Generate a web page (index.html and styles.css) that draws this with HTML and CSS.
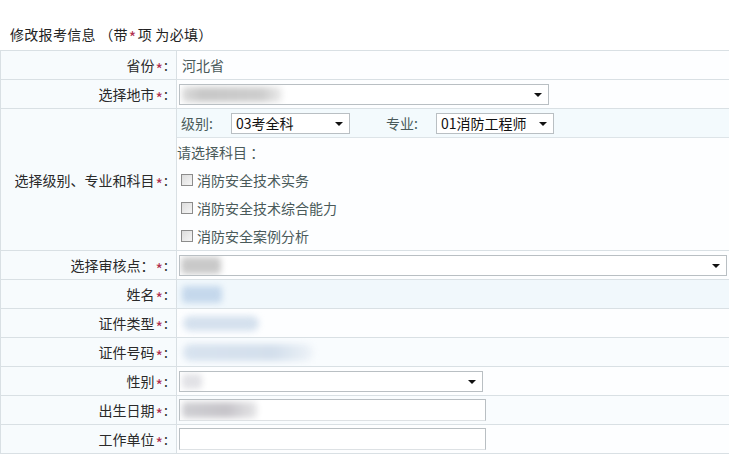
FILE: index.html
```
<!DOCTYPE html>
<html lang="zh">
<head>
<meta charset="utf-8">
<link rel="stylesheet" href="styles.css">
</head>
<body>
<div class="page">
  <div class="title">修改报考信息 （带<span class="req">*</span>项 为必填）</div>
  <div class="form">
    <div class="row">
      <div class="lab">省份<span class="req">*</span>:</div>
      <div class="val"><span class="text">河北省</span></div>
    </div>
    <div class="row">
      <div class="lab">选择地市<span class="req">*</span>:</div>
      <div class="val"><div class="sel w370"><span class="blur b-city"></span><i class="arrow"></i></div></div>
    </div>
    <div class="row tall">
      <div class="lab">选择级别、专业和科目<span class="req">*</span>:</div>
      <div class="val col">
        <div class="sub">
          <span class="text sm">级别:</span>
          <div class="sel w119"><span class="opt">03考全科</span><i class="arrow"></i></div>
          <span class="text sm gap">专业:</span>
          <div class="sel w118"><span class="opt">01消防工程师</span><i class="arrow"></i></div>
        </div>
        <div class="pick">请选择科目 ：</div>
        <label class="chk"><span class="box"></span>消防安全技术实务</label>
        <label class="chk"><span class="box"></span>消防安全技术综合能力</label>
        <label class="chk"><span class="box"></span>消防安全案例分析</label>
      </div>
    </div>
    <div class="row">
      <div class="lab">选择审核点：<span class="req">*</span>:</div>
      <div class="val"><div class="sel w548"><span class="blur b-gray"></span><i class="arrow"></i></div></div>
    </div>
    <div class="row alt">
      <div class="lab">姓名<span class="req">*</span>:</div>
      <div class="val"><span class="blur b-blue"></span></div>
    </div>
    <div class="row">
      <div class="lab">证件类型<span class="req">*</span>:</div>
      <div class="val"><span class="blur b-type"></span></div>
    </div>
    <div class="row alt2">
      <div class="lab">证件号码<span class="req">*</span>:</div>
      <div class="val"><span class="blur b-id"></span></div>
    </div>
    <div class="row">
      <div class="lab">性别<span class="req">*</span>:</div>
      <div class="val"><div class="sel w304"><span class="blur b-sex"></span><i class="arrow"></i></div></div>
    </div>
    <div class="row alt2">
      <div class="lab">出生日期<span class="req">*</span>:</div>
      <div class="val"><div class="inp"><span class="blur b-date"></span></div></div>
    </div>
    <div class="row">
      <div class="lab">工作单位<span class="req">*</span>:</div>
      <div class="val"><div class="inp"></div></div>
    </div>
  </div>
</div>
</body>
</html>
```
FILE: styles.css
```
html, body {
  margin: 0;
  padding: 0;
  background: #ffffff;
}
body {
  font-family: "Noto Sans CJK SC", "Liberation Sans", sans-serif;
  font-size: 14px;
  color: #222;
  width: 729px;
  height: 455px;
  overflow: hidden;
}
.page {
  width: 740px;
}
.title {
  height: 50px;
  box-sizing: border-box;
  padding: 24px 0 0 10px;
  font-size: 14px;
  line-height: 20px;
  color: #222;
  letter-spacing: 0.3px;
}
.req {
  color: #b0304e;
  position: relative;
  top: 4px;
  font-size: 16px;
  line-height: 1;
  padding: 0 1px;
}
.form {
  border-top: 1px solid #d9e0e4;
  border-left: 1px solid #d9e0e4;
}
.row {
  display: grid;
  grid-template-columns: 176px 1fr;
  height: 29px;
  border-bottom: 1px solid #d9e0e4;
  box-sizing: border-box;
  overflow: hidden;
}
.row.tall {
  height: 142px;
}
.lab {
  background: #f7fbfd;
  border-right: 1px solid #d9e0e4;
  display: flex;
  align-items: center;
  justify-content: flex-end;
  padding-right: 8px;
  color: #2a2a2a;
  white-space: nowrap;
}
.val {
  display: flex;
  align-items: center;
  padding-left: 2px;
  background: #fdfeff;
}
.row.alt .val {
  background: #f1f8fc;
}
.row.alt2 .val {
  background: #f9fcfe;
}
.val.col {
  flex-direction: column;
  align-items: stretch;
  padding-left: 0;
}
.text {
  color: #4a5a5a;
  padding-left: 3px;
  font-size: 14px;
}
.text.sm {
  padding-left: 4px;
  width: 50px;
}
.text.gap {
  margin-left: 32px;
}
.sub {
  height: 28px;
  flex: none;
  border-bottom: 1px solid #dde4e8;
  background: #f3fafd;
  display: flex;
  align-items: center;
}
.sel {
  position: relative;
  height: 21px;
  box-sizing: border-box;
  border: 1px solid #b9bfc3;
  background: #ffffff;
  display: flex;
  align-items: center;
  overflow: hidden;
  flex: none;
}
.w370 { width: 370px; }
.w548 { width: 548px; }
.w304 { width: 304px; }
.w119 { width: 119px; }
.w118 { width: 118px; }
.opt {
  padding-left: 4px;
  color: #111;
  font-size: 14px;
}
.arrow {
  position: absolute;
  right: 6px;
  top: 8px;
  width: 0;
  height: 0;
  border-left: 4px solid transparent;
  border-right: 4px solid transparent;
  border-top: 4px solid #111;
}
.inp {
  width: 307px;
  height: 22px;
  box-sizing: border-box;
  border: 1px solid #b9bfc3;
  border-bottom-color: #dde1e4;
  background: #fff;
  position: relative;
  overflow: hidden;
}
.pick {
  height: 28px;
  flex: none;
  display: flex;
  align-items: center;
  color: #4a5a5a;
}
.chk {
  height: 28px;
  flex: none;
  display: flex;
  align-items: center;
  padding-left: 4px;
  color: #4a5a5a;
}
.box {
  width: 12px;
  height: 12px;
  box-sizing: border-box;
  border: 1px solid #8c8c8c;
  background: linear-gradient(135deg, #dcdcdc, #f6f6f6);
  margin-right: 4px;
}
.blur {
  display: block;
  filter: blur(3px);
  border-radius: 4px;
}
.b-city {
  width: 100px;
  height: 15px;
  margin-left: 2px;
  background: linear-gradient(90deg, #dcdcdc 0%, #c7c7c7 20%, #cdcdcd 80%, #ececec 100%);
}
.b-gray {
  width: 40px;
  height: 17px;
  margin-left: 1px;
  background: #c9c9c9;
}
.b-blue {
  width: 40px;
  height: 17px;
  margin-left: 3px;
  background: #c5d8ec;
}
.b-type {
  width: 76px;
  height: 15px;
  margin-left: 4px;
  border-radius: 8px;
  background: #d5e1ee;
}
.b-id {
  width: 130px;
  height: 17px;
  margin-left: 4px;
  border-radius: 8px;
  background: linear-gradient(90deg, #d8e3ef 0%, #d3dfec 70%, #eef3f8 100%);
}
.b-sex {
  width: 20px;
  height: 15px;
  margin-left: 2px;
  background: #e2e2e6;
}
.b-date {
  position: absolute;
  left: 2px;
  top: 2px;
  width: 75px;
  height: 16px;
  background: linear-gradient(90deg, #cfcfd3 0%, #c6c4c9 60%, #e6e6e8 100%);
}
```
